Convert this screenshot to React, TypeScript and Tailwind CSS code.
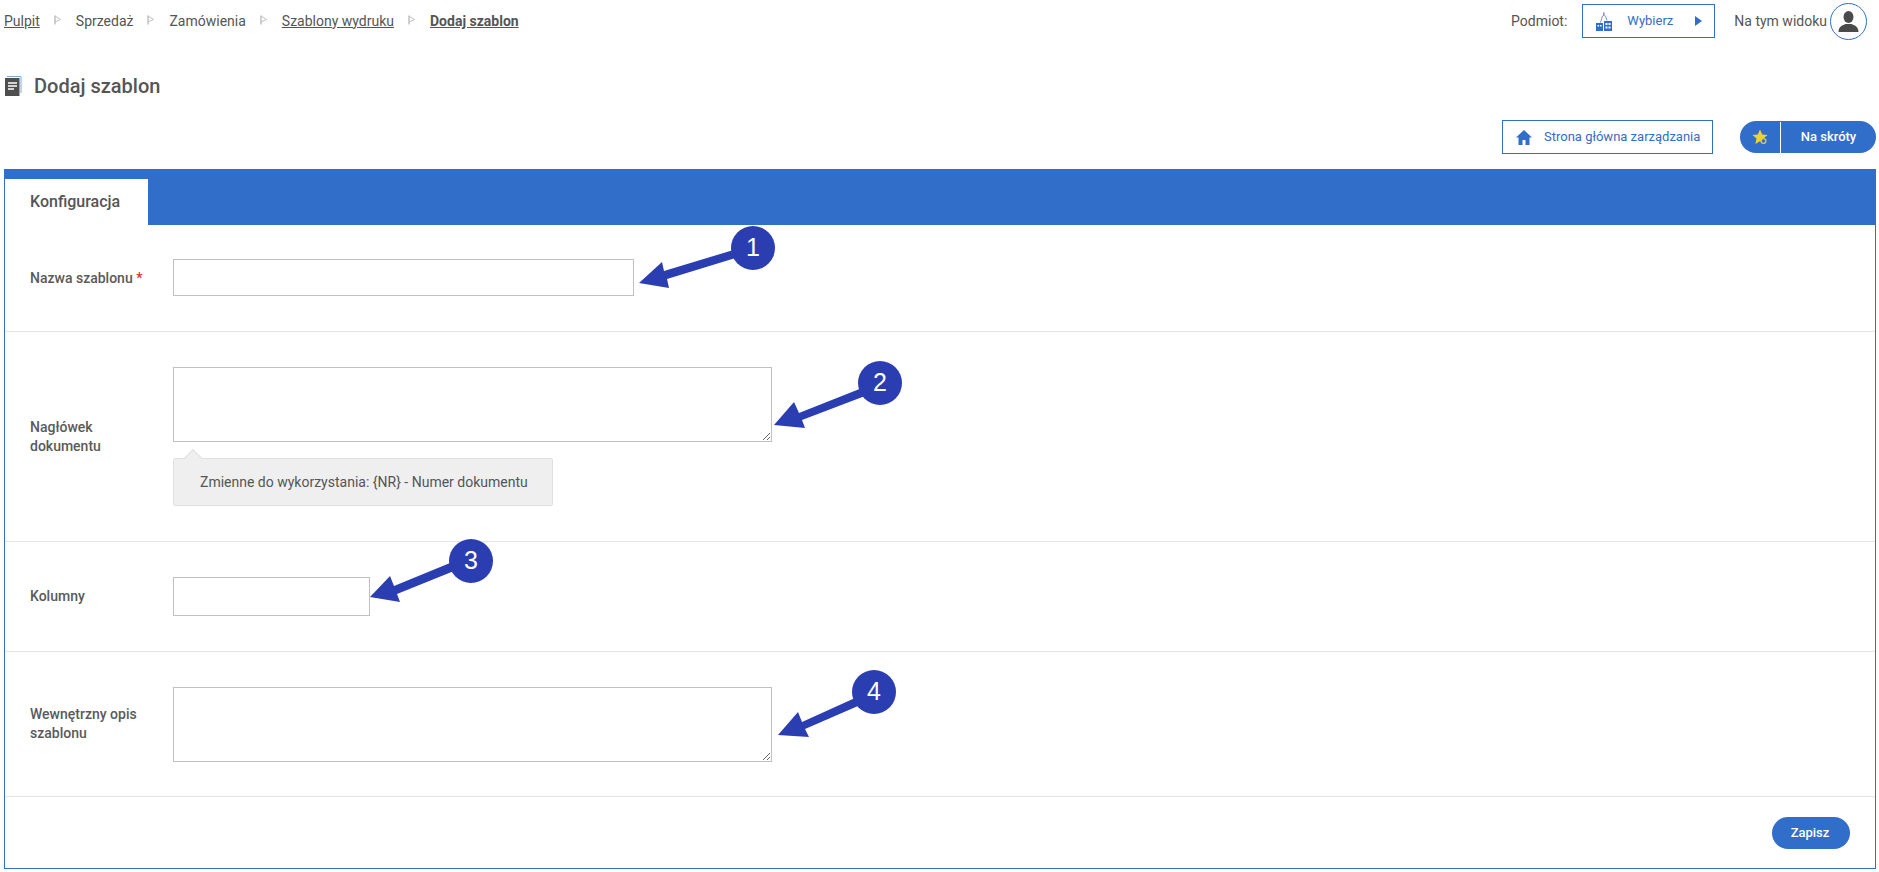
import React from "react";

const crumbs = [
  { t: "Pulpit", u: true },
  { t: "Sprzedaż" },
  { t: "Zamówienia" },
  { t: "Szablony wydruku", u: true },
  { t: "Dodaj szablon", u: true, b: true },
];

function CrumbSep() {
  return (
    <svg width="8" height="10" viewBox="0 0 8 10" className="mx-[14px] mb-[3px]">
      <path d="M1 0.5 L1 9.5" fill="none" stroke="#a0a0a0" strokeWidth="1" />
      <path d="M1 1 L6.5 4.5 L1 7" fill="none" stroke="#c0c0c0" strokeWidth="1" />
    </svg>
  );
}

function Marker({ n, cx, cy, d }: { n: number; cx: number; cy: number; d: string }) {
  return (
    <>
      <svg className="absolute left-0 top-0 pointer-events-none" width="1879" height="872">
        <path d={d} fill="#2b3eb1" stroke="none" />
      </svg>
      <div
        className="absolute w-[44px] h-[44px] rounded-full bg-[#2b3eb1] text-white flex items-center justify-center text-[25px] font-['Liberation_Sans',sans-serif]"
        style={{ left: cx - 22, top: cy - 22 }}
      >
        {n}
      </div>
    </>
  );
}

function Row({ label, req, h, children }: { label: React.ReactNode; req?: boolean; h: string; children: React.ReactNode }) {
  return (
    <div className={`flex items-center border-b border-[#e5e5e5] pl-[25px] ${h}`}>
      <div className="w-[143px] text-[14px] leading-[19px] font-medium text-[#5a5a5a] shrink-0 pr-4">
        {label}
        {req && <span className="text-[#d9302f]"> *</span>}
      </div>
      <div>{children}</div>
    </div>
  );
}

export default function App() {
  return (
    <div className="relative w-[1879px] h-[872px] overflow-hidden bg-white font-['Roboto',sans-serif] text-[#555]">
      <header className="flex items-center justify-between h-[42px] pl-[4px] pr-[12px]">
        <nav className="flex items-center text-[14px] text-[#555]">
          {crumbs.map((c, i) => (
            <React.Fragment key={c.t}>
              {i > 0 && <CrumbSep />}
              <span className={`${c.u ? "underline" : ""} ${c.b ? "font-bold" : ""}`}>{c.t}</span>
            </React.Fragment>
          ))}
        </nav>
        <div className="flex items-center text-[14px]">
          <span>Podmiot:</span>
          <button className="ml-[15px] w-[133px] h-[34px] border border-[#306ec9] flex items-center text-[#306ec9] text-[13px] pl-[13px] pr-[12px]">
            <svg width="16" height="19" viewBox="0 0 16 19" fill="#306ec9">
              <path d="M0 11h7v8H0zM8 9h8v10H8z" />
              <path d="M4.5 10.5 L6.5 4 L7.5 3.5 L7.8 0.5 L8.2 3.5 L9.5 4 L11 8.5" fill="none" stroke="#8a86e0" strokeWidth="1" />
              <path d="M1.5 13h1.6v1.6H1.5zM4 13h1.6v1.6H4zM9.5 11h2v2h-2zM12.5 11h2v2h-2zM9.5 14.5h2v2h-2zM12.5 14.5h2v2h-2z" fill="#fff" />
            </svg>
            <span className="ml-[15px] flex-1 text-left">Wybierz</span>
            <svg width="7" height="10" viewBox="0 0 7 10" fill="#306ec9">
              <path d="M0 0 L7 5 L0 10z" />
            </svg>
          </button>
          <span className="ml-[19px]">Na tym widoku</span>
          <span className="ml-[3px] w-[37px] h-[37px] rounded-full border border-[#306ec9] flex items-center justify-center">
            <svg width="21" height="21" viewBox="0 0 21 21" fill="#4a4a4a">
              <ellipse cx="10.5" cy="6" rx="5" ry="6" />
              <path d="M0.5 21 C0.5 15 5 14.5 7.5 13 L13.5 13 C16 14.5 20.5 15 20.5 21z" />
            </svg>
          </span>
        </div>
      </header>

      <div className="flex items-center h-[52px] pl-[5px] mt-[18px]">
        <svg width="17" height="20" viewBox="0 0 17 20">
          <path d="M2 0.5 H16 V17" fill="none" stroke="#7fa9dc" strokeWidth="1" />
          <rect x="0" y="2" width="14.5" height="18" fill="#4f4f4f" />
          <path d="M3 7h9M3 10h9M3 13h6" stroke="#fff" strokeWidth="1.3" />
        </svg>
        <h1 className="ml-[12px] text-[20px] font-medium text-[#555]">Dodaj szablon</h1>
      </div>

      <div className="flex justify-end items-center h-[34px] mt-[8px] pr-[3px]">
        <button className="w-[211px] h-[34px] border border-[#306ec9] flex items-center text-[#306ec9] text-[13px] pl-[13px]">
          <svg width="16" height="15" viewBox="0 0 16 15" fill="#306ec9">
            <path d="M8 0 L16 7.5 H13.5 V15 H9.5 V10 H6.5 V15 H2.5 V7.5 H0z" />
          </svg>
          <span className="ml-[12px]">Strona główna zarządzania</span>
        </button>
        <div className="ml-[27px] w-[136px] h-[32px] rounded-full bg-[#306ec9] text-white flex items-center text-[13px] font-medium">
          <span className="w-[40px] flex justify-center items-center">
            <svg width="16" height="16" viewBox="0 0 16 16">
              <path d="M8 0.5 L10.2 5.4 L15.5 6 L11.5 9.6 L12.6 15 L8 12.2 L3.4 15 L4.5 9.6 L0.5 6 L5.8 5.4z" fill="#f3cf3b" />
              <circle cx="11.5" cy="12" r="2.4" fill="#306ec9" stroke="#e6c84a" strokeWidth="1.3" />
            </svg>
          </span>
          <span className="w-px h-[31px] bg-white" />
          <span className="flex-1 text-center">Na skróty</span>
        </div>
      </div>

      <main className="mt-[15px] ml-[4px] w-[1872px] h-[700px] border border-[#306ec9] border-t-0 flex flex-col">
        <div className="h-[56px] bg-[#306ec9] flex items-end shrink-0 -ml-px -mr-px">
          <div className="w-[143px] h-[46px] bg-white ml-px flex items-center pl-[25px] text-[16px] font-medium text-[#555]">
            Konfiguracja
          </div>
        </div>
        <Row label="Nazwa szablonu" req h="h-[107px]">
          <input className="block w-[461px] h-[37px] mb-[2px] border border-[#c0c0c0] bg-white" />
        </Row>
        <Row label="Nagłówek dokumentu" h="h-[210px]">
          <textarea className="block w-[599px] h-[75px] border border-[#c0c0c0] bg-white" />
          <div className="relative mt-[16px] w-[380px] h-[48px] bg-[#efefef] border border-[#e0e0e0] rounded-[2px] flex items-center pl-[26px] text-[14px] text-[#555]">
            <span className="absolute left-[12px] top-[-7px] w-[14px] h-[14px] rotate-45 bg-[#efefef] border-l border-t border-[#e0e0e0]" />
            <span className="relative">Zmienne do wykorzystania: {"{NR}"} - Numer dokumentu</span>
          </div>
        </Row>
        <Row label="Kolumny" h="h-[110px]">
          <input className="block w-[197px] h-[39px] border border-[#c0c0c0] bg-white" />
        </Row>
        <Row label="Wewnętrzny opis szablonu" h="h-[145px]">
          <textarea className="block w-[599px] h-[75px] border border-[#c0c0c0] bg-white" />
        </Row>
        <div className="flex-1 flex items-center justify-end pr-[25px]">
          <button className="w-[78px] h-[32px] rounded-full bg-[#306ec9] text-white text-[13px] font-medium pr-[2px]">Zapisz</button>
        </div>
      </main>

      <Marker n={1} cx={753} cy={248} d="M639 283 L662 262 L664 271 L740 248 L742 256 L667 279 L669 288z" />
      <Marker n={2} cx={880} cy={383} d="M774 425 L794 402 L799 413 L862 388 L865 396 L802 420 L805 428z" />
      <Marker n={3} cx={471} cy={561} d="M370 597 L390 576 L394 586 L450 563 L454 571 L397 594 L400 602z" />
      <Marker n={4} cx={874} cy={692} d="M778 735 L798 712 L802 722 L855 698 L858 706 L805 729 L809 737z" />
    </div>
  );
}
